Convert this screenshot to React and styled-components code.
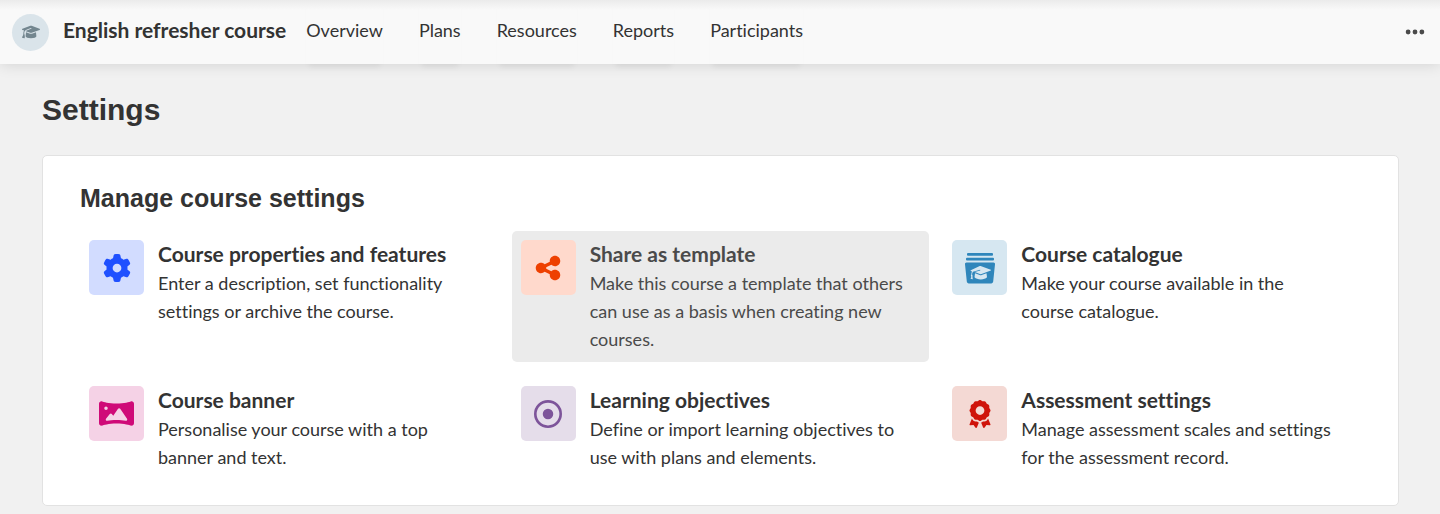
import React from 'react';
import styled, { createGlobalStyle } from 'styled-components';
import {
  FaAward,
  FaEllipsis,
  FaGear,
  FaGraduationCap,
  FaPanorama,
  FaRegCircleDot,
  FaShareNodes,
} from 'react-icons/fa6';

const GlobalStyle = createGlobalStyle`
  * {
    box-sizing: border-box;
  }

  body {
    margin: 0;
    background: #f1f1f1;
    color: #333;
    font-family: Lato, 'Liberation Sans', sans-serif;
    font-size: 18px;
    font-variant-ligatures: none;
  }
`;

const Header = styled.header`
  display: flex;
  align-items: center;
  height: 64px;
  padding: 0 14px 0 12px;
  background: linear-gradient(#ebebeb, #f9f9f9 10px);
  box-shadow: 0 1px 14px rgba(0, 0, 0, 0.12);
`;

const Avatar = styled.span`
  display: flex;
  align-items: center;
  justify-content: center;
  width: 37px;
  height: 37px;
  border-radius: 50%;
  background: #dae4ea;
  color: #73868f;
`;

const CourseName = styled.strong`
  height: 64px;
  margin: 0 20px 0 14px;
  font-size: 21px;
  font-weight: 700;
  line-height: 60px;
`;

const Nav = styled.nav`
  display: flex;
  gap: 36px;
`;

const NavLink = styled.a`
  height: 64px;
  color: inherit;
  line-height: 60px;
  text-decoration: none;
  box-shadow: 0 6px 6px -3px rgba(0, 0, 0, 0.05);
`;

const MoreButton = styled.button`
  display: flex;
  margin-left: auto;
  padding: 0;
  border: 0;
  background: none;
  color: #4a4a4a;
  cursor: pointer;
`;

const Main = styled.main`
  padding: 28px 41px 8px 42px;
`;

const PageTitle = styled.h1`
  margin: 0 0 27px;
  font-family: 'Liberation Sans', Arial, sans-serif;
  font-size: 30px;
  line-height: 36px;
`;

const Panel = styled.section`
  padding: 26px 37px 25px 37px;
  border: 1px solid #e2e2e2;
  border-radius: 5px;
  background: #fff;
`;

const PanelTitle = styled.h2`
  margin: 0 0 17px;
  font-family: 'Liberation Sans', Arial, sans-serif;
  font-size: 25px;
  line-height: 32px;
`;

const Grid = styled.div`
  display: grid;
  grid-template-columns: repeat(3, 1fr);
  gap: 15px 14px;
`;

const Tile = styled.a`
  display: flex;
  gap: 14px;
  align-items: flex-start;
  padding: 9px 22px 9px 9px;
  border-radius: 5px;
  background: ${p => (p.$active ? '#ebebeb' : 'transparent')};
  color: ${p => (p.$active ? '#4a4a4a' : '#333')};
  text-decoration: none;
`;

const TileIcon = styled.span`
  display: flex;
  flex: none;
  align-items: center;
  justify-content: center;
  width: 55px;
  height: 55px;
  border-radius: 5px;
  background: ${p => p.$bg};
  color: ${p => p.$color};
`;

const TileTitle = styled.h3`
  margin: 0 0 1px;
  font-size: 21px;
  font-weight: 700;
  line-height: 28px;
`;

const TileText = styled.p`
  margin: 0;
  line-height: 28px;
`;

// Stacked course cards with a graduation cap on the front one
function CatalogueIcon({ size }) {
  return (
    <svg viewBox="0 0 30 32" width={size} height={size} aria-hidden="true">
      <g fill="currentColor">
        <rect x="2" y="1" width="26" height="2.8" rx="1" />
        <rect x="1" y="5.8" width="28" height="2.8" rx="1" />
        <path d="M1.5 10.6h27c1 0 1.6.8 1.5 1.7l-1.8 17.2c-.1 1.1-.9 1.9-2 1.9H3.8c-1.1 0-1.9-.8-2-1.9L0 12.3c-.1-.9.5-1.7 1.5-1.7z" />
      </g>
      <g fill="#d6e7f1">
        <path d="M15.6 14 25.8 17.8q.6.3 0 .6L16.5 22q-.8.3-1.6 0L9.8 20.1l5.5-1.6-.2-.7-7.1 2c-.7.8-.9 1.9-.8 3.1.6.5.6 1.2.2 1.6l.4 2.7-2.3-.5c.7-.9.9-1.7.7-2.5-.5-.5-.4-1.1.1-1.5 0-1.3.2-2.3.7-3.2l-1.2-.5q-.7-.3 0-.7L14.7 14q.5-.2.9 0z" />
        <path d="m10 21.3 4.7 1.8q1 .4 2 0l4.8-1.9.5 4c-1.2 1.3-3.5 2.2-6.2 2.2s-5-.8-6.3-2.2z" />
      </g>
    </svg>
  );
}

const navItems = ['Overview', 'Plans', 'Resources', 'Reports', 'Participants'];

const settings = [
  {
    title: 'Course properties and features',
    text: 'Enter a description, set functionality settings or archive the course.',
    icon: FaGear,
    color: '#1f50ff',
    bg: '#d2dcff',
  },
  {
    title: 'Share as template',
    text: 'Make this course a template that others can use as a basis when creating new courses.',
    icon: FaShareNodes,
    color: '#ee4000',
    bg: '#ffd9cc',
    active: true,
  },
  {
    title: 'Course catalogue',
    text: 'Make your course available in the course catalogue.',
    icon: CatalogueIcon,
    iconSize: 32,
    color: '#2f86bb',
    bg: '#d6e7f1',
  },
  {
    title: 'Course banner',
    text: 'Personalise your course with a top banner and text.',
    icon: FaPanorama,
    iconSize: 35,
    color: '#cf0a78',
    bg: '#f5d2e6',
  },
  {
    title: 'Learning objectives',
    text: 'Define or import learning objectives to use with plans and elements.',
    icon: FaRegCircleDot,
    color: '#7d549a',
    bg: '#e5ddea',
  },
  {
    title: 'Assessment settings',
    text: 'Manage assessment scales and settings for the assessment record.',
    icon: FaAward,
    color: '#cf140b',
    bg: '#f4d9d4',
  },
];

function SettingTile({ setting }) {
  const Icon = setting.icon;
  return (
    <Tile href="#" $active={setting.active}>
      <TileIcon $bg={setting.bg} $color={setting.color}>
        <Icon size={setting.iconSize || 28} />
      </TileIcon>
      <div>
        <TileTitle>{setting.title}</TileTitle>
        <TileText>{setting.text}</TileText>
      </div>
    </Tile>
  );
}

export default function App() {
  return (
    <>
      <GlobalStyle />
      <Header>
        <Avatar>
          <FaGraduationCap size={18} />
        </Avatar>
        <CourseName>English refresher course</CourseName>
        <Nav>
          {navItems.map(item => (
            <NavLink key={item} href="#">{item}</NavLink>
          ))}
        </Nav>
        <MoreButton type="button" aria-label="More options">
          <FaEllipsis size={22} />
        </MoreButton>
      </Header>
      <Main>
        <PageTitle>Settings</PageTitle>
        <Panel>
          <PanelTitle>Manage course settings</PanelTitle>
          <Grid>
            {settings.map(setting => (
              <SettingTile key={setting.title} setting={setting} />
            ))}
          </Grid>
        </Panel>
      </Main>
    </>
  );
}
